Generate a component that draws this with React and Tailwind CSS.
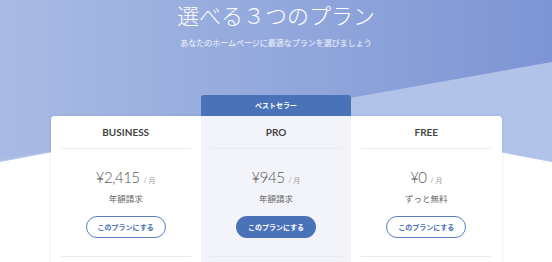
import React from 'react';

const plans = [
  { id: 'business', name: 'BUSINESS', price: '¥2,415', note: '年額請求', featured: false },
  { id: 'pro', name: 'PRO', price: '¥945', note: '年額請求', featured: true },
  { id: 'free', name: 'FREE', price: '¥0', note: 'ずっと無料', featured: false },
];

const jp = "font-['Lato','Noto_Sans_CJK_JP',sans-serif]";

const App = () => {
  return (
    <div className={`relative w-full h-[262px] overflow-hidden bg-gradient-to-r from-[#a9bbe4] to-[#7d95d4] ${jp}`}>
      {/* background shapes */}
      <svg className="absolute inset-0" width="552" height="262" viewBox="0 0 552 262">
        <polygon points="0,160 552,62 552,262 0,262" fill="#b1c3e8" />
        <polygon points="0,162 276,110 552,162 552,262 0,262" fill="#ffffff" />
      </svg>

      <div className="relative flex flex-col items-center">
        <h1 className="mt-[1px] text-[22px] leading-[30px] font-light text-white">
          選べる３つのプラン
        </h1>
        <p className="mt-[7px] text-[8px] leading-[10px] text-white/90">
          あなたのホームページに最適なプランを選びましょう
        </p>

        <div className="mt-[47px] w-[451px]">
          {/* badge row */}
          <div className="grid grid-cols-3">
            <div />
            <div className="h-[21px] rounded-t-[3px] bg-[#4a72b8] flex items-center justify-center text-white text-[7px] font-bold">
              ベストセラー
            </div>
            <div />
          </div>

          {/* cards */}
          <div className="grid grid-cols-3 rounded-[4px] bg-white shadow-[0_0_3px_rgba(60,80,130,0.15)] overflow-hidden">
            {plans.map((plan) => (
              <div
                key={plan.id}
                className={`h-[160px] px-[10px] flex flex-col ${plan.featured ? 'bg-[#f3f4f9]' : 'bg-white'}`}
              >
                <div className="h-[33px] flex items-center justify-center border-b border-[#e9ebf0] text-[10px] font-bold text-[#444]">
                  {plan.name}
                </div>
                <div className="mt-[19px] h-[18px] flex items-baseline justify-center text-[#555]">
                  <span className="text-[15px] leading-[18px] font-light tracking-[-0.5px]">{plan.price}</span>
                  <span className="ml-[4px] text-[7px] text-[#999]">/ 月</span>
                </div>
                <div className="mt-[7px] text-center text-[8.5px] leading-[12px] text-[#666]">{plan.note}</div>
                <div className="mt-[11px] flex justify-center">
                  <button
                    className={`w-[80px] h-[22px] rounded-full text-[7px] font-bold ${
                      plan.featured
                        ? 'bg-[#4a72b8] text-white'
                        : 'border-[1.5px] border-[#5b7fc2] text-[#4a6fb5] bg-white'
                    }`}
                  >
                    このプランにする
                  </button>
                </div>
                <div className="mt-[18px] border-t border-[#e9ebf0] h-[20px]" />
              </div>
            ))}
          </div>
        </div>
      </div>
    </div>
  );
};

export default App;
